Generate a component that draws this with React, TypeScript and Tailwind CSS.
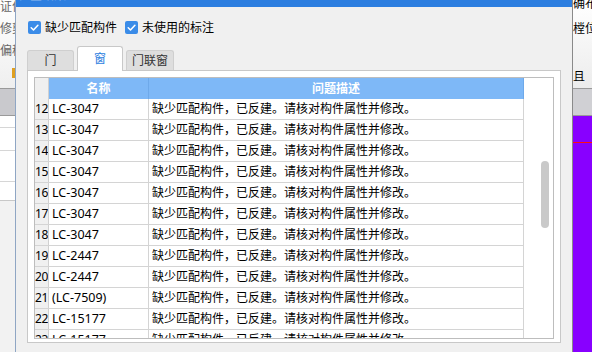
import React from "react";

const rows: [string, string][] = [
  ["12", "LC-3047"],
  ["13", "LC-3047"],
  ["14", "LC-3047"],
  ["15", "LC-3047"],
  ["16", "LC-3047"],
  ["17", "LC-3047"],
  ["18", "LC-3047"],
  ["19", "LC-2447"],
  ["20", "LC-2447"],
  ["21", "(LC-7509)"],
  ["22", "LC-15177"],
  ["23", "LC-15177"],
];

const desc = "缺少匹配构件，已反建。请核对构件属性并修改。";

const CheckBox: React.FC<{ label: string }> = ({ label }) => (
  <label className="flex items-center">
    <span className="flex h-[13px] w-[13px] items-center justify-center rounded-[2px] bg-[#3b8ce8]">
      <svg viewBox="0 0 12 12" className="h-[11px] w-[11px]">
        <path
          d="M2.4 6.3 4.9 8.7 9.7 3.5"
          fill="none"
          stroke="white"
          strokeWidth="1.7"
          strokeLinecap="round"
          strokeLinejoin="round"
        />
      </svg>
    </span>
    <span className="ml-[4px] text-[12px] leading-none text-black">{label}</span>
  </label>
);

export default function App() {
  return (
    <div className="flex h-[352px] w-[592px] overflow-hidden bg-[#f0f0f0] font-['Noto_Sans','Noto_Sans_CJK_SC',sans-serif]">
      {/* app behind the dialog, left side */}
      <div className="flex w-[15px] shrink-0 flex-col overflow-hidden bg-[#f2f2f2]">
        <div className="flex h-[88px] flex-col whitespace-nowrap bg-gradient-to-b from-white to-[#efefef] text-[12px] leading-[12px] text-[#666]">
          <span className="mt-[1px]">证件</span>
          <span className="mt-[10px]">修剪</span>
          <span className="mt-[10px]">偏移</span>
          <span className="ml-[12px] mt-[11px] h-[10px] w-[3px] bg-[#e0a020]" />
        </div>
        <div className="h-[28px] border-y border-[#9a9a9a] bg-[#c9c9cd]" />
        <div className="h-[12px] border-b border-[#d6d6d6] bg-white" />
        <div className="h-[23px] border-b border-[#d6d6d6] bg-white" />
        <div className="h-[31px] border-b border-[#d6d6d6] bg-white" />
        <div className="h-[19px] border-b border-[#c8c8c8] bg-white" />
      </div>

      {/* dialog */}
      <div className="flex w-[558px] shrink-0 flex-col border-x border-l-[#8fa6c4] border-r-[#8a8a8a] bg-[#f0f0f0]">
        <div className="h-[7px] overflow-hidden bg-[#2c7ee0] pl-[2px]">
          <div className="-mt-[10px] text-[12px] leading-[12px] text-white/35">检查结果</div>
        </div>

        <div className="mt-[12px] flex h-[17px] items-center gap-[8px] pl-[12px]">
          <CheckBox label="缺少匹配构件" />
          <CheckBox label="未使用的标注" />
        </div>

        <div className="mt-[10px] flex h-[24px] items-end gap-[3px] pl-[11px] text-[12px] leading-none">
          <div className="flex h-[20px] w-[47px] items-center justify-center rounded-t-[3px] border border-b-0 border-[#cfcfcf] bg-[#dedede] text-[#333]">
            门
          </div>
          <div className="relative z-10 -mb-px flex h-[25px] w-[46px] items-center justify-center rounded-t-[3px] border border-b-0 border-[#c8c8c8] bg-white text-[#2c7ee0]">
            窗
          </div>
          <div className="flex h-[20px] w-[48px] items-center justify-center rounded-t-[3px] border border-b-0 border-[#cfcfcf] bg-[#dedede] text-[#333]">
            门联窗
          </div>
        </div>

        <div className="mx-[11px] h-[273px] border border-[#c8c8c8] bg-white px-[6px] pb-[3px] pt-[6px]">
          <div className="flex h-[262px] overflow-hidden border border-[#bdbdbd] text-[12px] leading-none text-black">
            <div className="flex w-[489px] shrink-0 flex-col">
              <div className="flex h-[21px] shrink-0">
                <div className="w-[14px] border-r border-[#d0d0d0] bg-[#f0f0f0]" />
                <div className="flex w-[100px] items-center justify-center border-r border-[#6ea9ea] bg-[#7eb8f7] font-bold text-white">
                  名称
                </div>
                <div className="flex w-[375px] items-center justify-center border-r border-[#6ea9ea] bg-[#7eb8f7] font-bold text-white">
                  问题描述
                </div>
              </div>
              {rows.map(([n, name]) => (
                <div key={n} className="flex h-[21px] shrink-0 border-b border-[#d4d4d4]">
                  <div className="flex w-[14px] items-center overflow-hidden whitespace-nowrap border-r border-[#d0d0d0] bg-[#f0f0f0] tracking-[-0.3px]">
                    {n}
                  </div>
                  <div className="flex w-[100px] items-center border-r border-[#d4d4d4] pl-[3px] text-[12.5px]">
                    {name}
                  </div>
                  <div className="flex w-[375px] items-center border-r border-[#d4d4d4] pl-[3px]">
                    {desc}
                  </div>
                </div>
              ))}
            </div>
            <div className="flex-1 bg-white pl-[17px] pt-[83px]">
              <div className="h-[67px] w-[8px] rounded-full bg-[#c9c9c9]" />
            </div>
          </div>
        </div>
      </div>

      {/* app behind the dialog, right side */}
      <div className="flex flex-1 flex-col overflow-hidden">
        <div className="flex h-[88px] flex-col whitespace-nowrap bg-gradient-to-b from-white to-[#ececec] text-[12px] leading-[12px] text-black">
          <span className="-mt-[2px]">确布</span>
          <span className="mt-[13px]">樘位</span>
          <span className="mt-[36px]">且</span>
        </div>
        <div className="h-[28px] border-y border-[#9a9a9a] bg-[#d0d0d4]" />
        <div className="flex-1 bg-[#8800ff] pt-[26px]">
          <div className="h-px bg-[#ff1010]" />
        </div>
      </div>
    </div>
  );
}
